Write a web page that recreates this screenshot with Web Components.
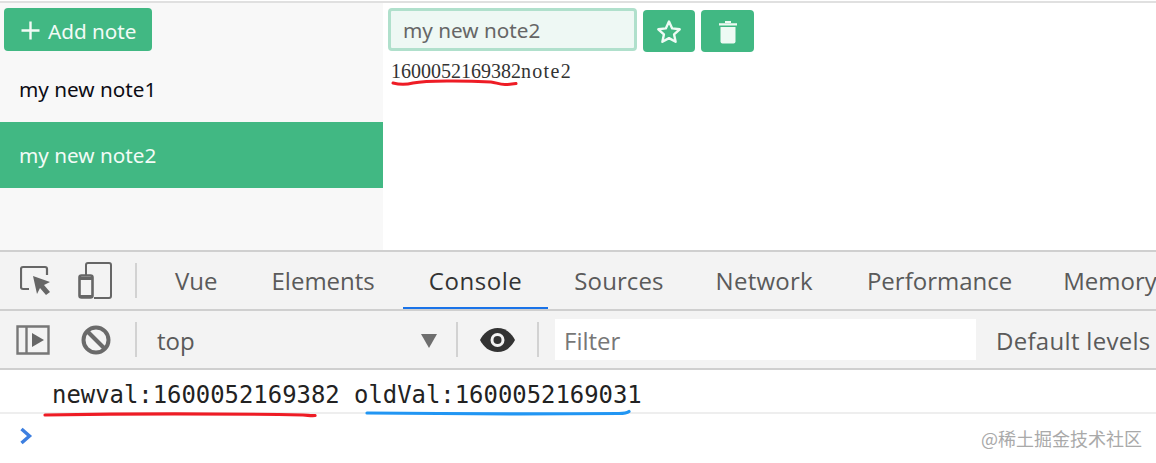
<!DOCTYPE html>
<html lang="en">
<head>
<meta charset="utf-8">
<title>Notes</title>
<style>
  html, body { margin: 0; height: 463px; overflow: hidden; background: #fff; }
  body { position: relative; font-family: "Open Sans", "Noto Sans", sans-serif; }
</style>
</head>
<body>
<notes-app></notes-app>
<dev-tools></dev-tools>

<script>
class NotesApp extends HTMLElement {
	constructor() {
		super();
		this.attachShadow({ mode: 'open' }).innerHTML = `
			<style>
				:host { display: flex; height: 247px; margin-top: 1px; border-top: 2px solid #e0e0e0; }
			</style>
			<note-list></note-list>
			<note-editor></note-editor>`;
	}
}

class NoteList extends HTMLElement {
	constructor() {
		super();
		this.attachShadow({ mode: 'open' }).innerHTML = `
			<style>
				:host {
					display: block;
					width: 383px;
					flex: none;
					background: #f8f8f8;
					font-family: "Noto Sans", sans-serif;
					font-size: 20.7px;
				}
				.add {
					display: flex;
					align-items: center;
					gap: 8px;
					box-sizing: border-box;
					width: 148px;
					height: 43px;
					margin: 5px 0 6px 4px;
					padding: 3px 0 0 17px;
					background: #41b883;
					color: #f2fbf6;
					border-radius: 4px;
				}
				.add svg { margin-top: -1px; }
				.item { box-sizing: border-box; height: 66px; padding-left: 19px; display: flex; align-items: center; color: #0c0c14; }
				.first { height: 65px; padding-bottom: 2px; }
				.active { background: #41b883; color: #f2fbf6; }
			</style>
			<div class="add">
				<svg width="19" height="19" viewBox="0 0 19 19"><path d="M9.500 0.500v18M0.500 9.500h18" stroke="#f2fbf6" stroke-width="2.400"/></svg>
				<span>Add note</span>
			</div>
			<div class="item first">my new note1</div>
			<div class="item active">my new note2</div>`;
	}
}

class NoteEditor extends HTMLElement {
	constructor() {
		super();
		this.attachShadow({ mode: 'open' }).innerHTML = `
			<style>
				:host { display: block; flex: 1; position: relative; padding: 5px 0 0 5px; }
				.bar { display: flex; align-items: flex-start; gap: 6px; }
				.title {
					box-sizing: border-box;
					width: 249px;
					height: 43px;
					padding-left: 12px;
					display: flex;
					align-items: center;
					background: #eef8f4;
					border: 3px solid #b0e0cc;
					border-radius: 4px;
					color: #666;
					font: 20.7px "Noto Sans", sans-serif;
				}
				.btn {
					width: 53px;
					height: 42px;
					margin-top: 2px;
					background: #41b883;
					border-radius: 4px;
					display: flex;
					align-items: center;
					justify-content: center;
				}
				.star { width: 52px; }
				.preview { margin: 7px 0 0 3px; font: 20px/24px "Liberation Serif", serif; color: #333; }
				.preview span { letter-spacing: 1.3px; }
				svg.mark { position: absolute; left: 8px; top: 74px; }
			</style>
			<div class="bar">
				<div class="title">my new note2</div>
				<div class="btn star">
					<svg width="26" height="25" viewBox="0 0 26 25"><path d="M13 2.500l3.200 6.900 7.500.9-5.600 5.100 1.500 7.400-6.600-3.700-6.600 3.700 1.500-7.400-5.600-5.100 7.500-.9z" fill="none" stroke="#eefaf4" stroke-width="2.400" stroke-linejoin="round"/></svg>
				</div>
				<div class="btn">
					<svg width="20" height="25" viewBox="0 0 20 25"><path d="M1 4.200h18v2.200H1zM7 2h6v2H7z" fill="#eefaf4"/><path d="M2.500 8h15v14.500a2 2 0 0 1-2 2h-11a2 2 0 0 1-2-2z" fill="#eefaf4"/></svg>
				</div>
			</div>
			<div class="preview">1600052169382<span>note2</span></div>
			<svg class="mark" width="130" height="10" viewBox="0 0 130 10"><path d="M2 6c6 1.500 14 1.500 20 0 14-2.500 50-2.500 78-1 5 .5 8 2.500 14 2.500 4 0 8-.5 11-1" fill="none" stroke="#ee1c25" stroke-width="3" stroke-linecap="round"/></svg>`;
	}
}

class DevTools extends HTMLElement {
	constructor() {
		super();
		this.attachShadow({ mode: 'open' }).innerHTML = `
			<style>
				:host { display: block; position: relative; font-family: "Open Sans", sans-serif; color: #5a5a5a; }
				.tabs, .filters {
					display: flex;
					align-items: center;
					background: #f3f3f3;
					box-sizing: border-box;
					white-space: nowrap;
					overflow: hidden;
				}
				.tabs { height: 61px; border-top: 2px solid #cfcfcf; border-bottom: 2px solid #cfcfcf; }
				.filters { height: 59px; border-bottom: 2px solid #cfcfcf; }
				.sep { width: 2px; height: 35px; background: #d2d2d2; flex: none; }
				.tab { font-size: 24px; line-height: 60px; height: 59px; padding: 0 26px; flex: none; box-sizing: border-box; }
				.on { color: #333; box-shadow: inset 0 -3px 0 #1a73e8; letter-spacing: .55px; }
				.ctx { font-size: 24px; width: 319px; padding: 2px 0 0 20px; box-sizing: border-box; flex: none; display: flex; align-items: center; }
				.ctx i { margin-left: auto; margin-right: 19px; border: 8px solid transparent; border-top: 14px solid #6e6e6e; border-bottom: 0; }
				.filter { width: 421px; height: 41px; background: #fff; margin-left: 16px; padding: 1px 0 0 9px; box-sizing: border-box; font-size: 24px; line-height: 42px; color: #777; flex: none; }
				.levels { font-size: 24px; margin: 2px 0 0 20px; flex: none; letter-spacing: .3px; }
				.log {
					height: 44px;
					box-sizing: border-box;
					padding: 10px 0 0 52px;
					font: 23.9px/30px "DejaVu Sans Mono", monospace;
					color: #222;
					border-bottom: 2px solid #eee;
					white-space: pre;
				}
				.prompt { height: 49px; display: flex; justify-content: space-between; padding: 0 14px 0 19px; }
				.prompt svg { margin-top: 13px; }
				.brand { font: 18px/48px "Noto Sans CJK SC", sans-serif; color: #a9a9a9; }
				svg.scribble { position: absolute; left: 0; top: 153px; pointer-events: none; }
			</style>
			<div class="tabs">
				<svg style="margin-left:20px;flex:none" width="32" height="34" viewBox="0 0 32 34">
					<path d="M9 25H3a2 2 0 0 1-2-2V5a2 2 0 0 1 2-2h22a2 2 0 0 1 2 2v6" fill="none" stroke="#666" stroke-width="2.200"/>
					<path d="M13 12l17 6-6 3 6 7-4 3-6-7-3 6z" fill="#666"/>
				</svg>
				<svg style="margin-left:26px;margin-right:23px;flex:none" width="34" height="38" viewBox="0 0 34 38">
					<path d="M8 13V3a2 2 0 0 1 2-2h21a2 2 0 0 1 2 2v31a2 2 0 0 1-2 2H16" fill="none" stroke="#666" stroke-width="2"/>
					<rect x="1.500" y="13.500" width="13" height="22" rx="2" fill="none" stroke="#666" stroke-width="2.600"/>
					<path d="M1 15h14v3H1zM1 33h14v3H1z" fill="#666"/>
				</svg>
				<div class="sep"></div>
				<div class="tab" style="padding:0 26px 0 38px">Vue</div>
				<div class="tab" style="padding:0 28px">Elements</div>
				<div class="tab on">Console</div>
				<div class="tab" style="letter-spacing:.1px">Sources</div>
				<div class="tab" style="letter-spacing:.25px;padding-right:28px">Network</div>
				<div class="tab" style="padding-right:25px">Performance</div>
				<div class="tab">Memory</div>
			</div>
			<div class="filters">
				<svg style="margin-left:16px;flex:none" width="34" height="30" viewBox="0 0 34 30">
					<path d="M1.500 1.500h31v27h-31zM10.500 1.500v27" fill="none" stroke="#777" stroke-width="2.400"/>
					<path d="M16 8l12 7-12 7z" fill="#666"/>
				</svg>
				<svg style="margin-left:31px;margin-right:24px;flex:none" width="30" height="30" viewBox="0 0 30 30">
					<circle cx="15" cy="15" r="12.500" fill="none" stroke="#6a6a6a" stroke-width="4"/>
					<path d="M6 6l18 18" stroke="#6a6a6a" stroke-width="4"/>
				</svg>
				<div class="sep"></div>
				<div class="ctx"><span>top</span><i></i></div>
				<div class="sep"></div>
				<svg style="margin-left:22px;margin-right:22px;flex:none" width="35" height="24" viewBox="0 0 35 24">
					<path d="M17.500 0C9.500 0 3.500 5 0 12c3.500 7 9.500 12 17.500 12S31.500 19 35 12C31.500 5 25.500 0 17.500 0z" fill="#333"/>
					<circle cx="17.500" cy="12" r="7" fill="#f3f3f3"/><circle cx="17.500" cy="12" r="4" fill="#333"/>
				</svg>
				<div class="sep"></div>
				<div class="filter">Filter</div>
				<div class="levels">Default levels</div>
			</div>
			<div class="log">newval:1600052169382 oldVal:1600052169031</div>
			<div class="prompt">
				<svg width="14" height="18" viewBox="0 0 14 18"><path d="M2.500 2l8 7-8 7" fill="none" stroke="#3d7fe0" stroke-width="3.400"/></svg>
				<span class="brand">@稀土掘金技术社区</span>
			</div>
			<svg class="scribble" width="660" height="30" viewBox="0 0 660 30">
				<path d="M45 12c80-1.500 180-1.500 258 0 4 0 8 1 12 .5" fill="none" stroke="#ee1c25" stroke-width="3.200" stroke-linecap="round"/>
				<path d="M367 10c90 1 180 1 252 .5 5 0 8-.5 10-2" fill="none" stroke="#2196f3" stroke-width="3.200" stroke-linecap="round"/>
			</svg>`;
	}
}

customElements.define('notes-app', NotesApp);
customElements.define('note-list', NoteList);
customElements.define('note-editor', NoteEditor);
customElements.define('dev-tools', DevTools);
</script>
</body>
</html>
